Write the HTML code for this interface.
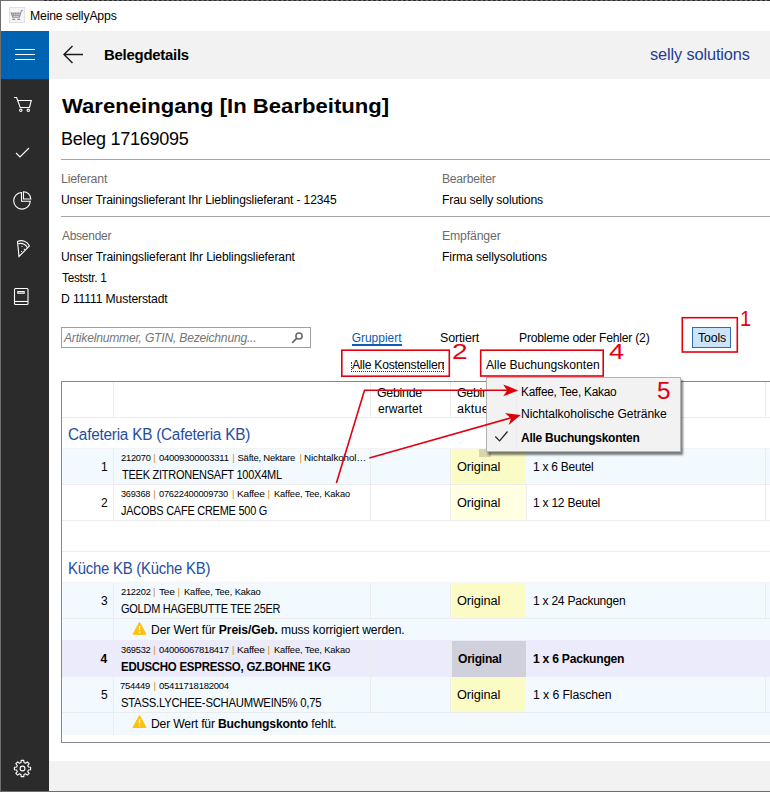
<!DOCTYPE html>
<html lang="de"><head><meta charset="utf-8"><title>Meine sellyApps</title>
<style>
html,body{margin:0;padding:0;}
body{width:770px;height:792px;position:relative;overflow:hidden;background:#fff;font-family:"Liberation Sans",sans-serif;}
.a{position:absolute;}
.t{position:absolute;white-space:nowrap;}
.t b{font-weight:700;}
.bl{display:inline-block;width:0;height:0;}
.hl{position:absolute;height:1px;background:#ececec;}
.vl{position:absolute;width:1px;background:#ececec;}
</style></head><body>
<!-- window chrome -->
<div class="a" style="left:0;top:0;width:770px;height:1px;background:#707070;"></div>
<div class="a" style="left:44px;top:0;width:726px;height:0;border-top:1px dashed #2e2e2e;"></div>
<div class="a" style="left:0;top:31px;width:770px;height:48px;background:#f2f2f2;"></div>
<div class="a" style="left:0;top:31px;width:49px;height:48px;background:#0063b1;"></div>
<div class="a" style="left:0;top:79px;width:49px;height:713px;background:#2b2b2b;"></div>
<div class="a" style="left:49px;top:761px;width:721px;height:31px;background:#f2f2f2;"></div>
<div class="a" style="left:0;top:0;width:1px;height:792px;background:#6e6e6e;"></div>
<div class="a" style="left:0;top:791px;width:770px;height:1px;background:#6e6e6e;"></div>
<!-- title icon -->
<div class="a" style="left:9px;top:7px;width:16px;height:16px;background:#f5f5f5;border:1px solid #e2e2e2;box-sizing:border-box;"></div>
<!-- hamburger -->
<div class="a" style="left:15px;top:49px;width:20px;height:1px;background:#fff;"></div>
<div class="a" style="left:15px;top:54px;width:20px;height:1px;background:#fff;"></div>
<div class="a" style="left:15px;top:59px;width:20px;height:1px;background:#fff;"></div>
<!-- rules -->
<div class="a" style="left:61px;top:159px;width:709px;height:1px;background:#a6a6a6;"></div>
<div class="a" style="left:61px;top:216px;width:709px;height:1px;background:#a6a6a6;"></div>
<!-- search -->
<div class="a" style="left:61px;top:327px;width:250px;height:21px;border:1px solid #9c9fa5;box-sizing:border-box;background:#fff;"></div>
<!-- Gruppiert underline -->
<div class="a" style="left:352px;top:344px;width:50px;height:2px;background:#0a5cb8;"></div>
<!-- tools button -->
<div class="a" style="left:692px;top:327px;width:39px;height:21px;border:1px solid #2a6fb5;box-sizing:border-box;background:#cce4f7;"></div>
<!-- focus dotted -->
<div class="a" style="left:351px;top:362px;width:93px;height:10px;border:1px dotted #333;border-top:none;border-right:1px dotted #333;box-sizing:border-box;"></div>

<!-- table -->
<div class="a" id="tbl" style="left:61px;top:381px;width:720px;height:362px;border:1px solid #828790;box-sizing:border-box;background:#fff;"></div>
<!-- row backgrounds -->
<div class="a" style="left:62px;top:449px;width:708px;height:35px;background:#f2f9ff;"></div>
<div class="a" style="left:62px;top:583px;width:708px;height:57px;background:#f2f9ff;"></div>
<div class="a" style="left:62px;top:640px;width:708px;height:37px;background:#ebebfb;"></div>
<div class="a" style="left:62px;top:677px;width:708px;height:58px;background:#f2f9ff;"></div>
<!-- yellow cells -->
<div class="a" style="left:452px;top:449px;width:74px;height:35px;background:#fbfbc6;"></div>
<div class="a" style="left:452px;top:485px;width:74px;height:35px;background:#ffffe2;"></div>
<div class="a" style="left:452px;top:583px;width:74px;height:35px;background:#fbfbc6;"></div>
<div class="a" style="left:452px;top:641px;width:74px;height:36px;background:#d0d0dc;"></div>
<div class="a" style="left:452px;top:677px;width:74px;height:35px;background:#fbfbc6;"></div>
<!-- grid lines -->
<div class="hl" style="left:62px;top:417px;width:708px;"></div>
<div class="hl" style="left:62px;top:448px;width:708px;background:#f4f4f4;"></div>
<div class="hl" style="left:62px;top:484px;width:708px;"></div>
<div class="hl" style="left:62px;top:520px;width:708px;"></div>
<div class="hl" style="left:62px;top:551px;width:708px;"></div>
<div class="hl" style="left:62px;top:582px;width:708px;background:#f4f4f4;"></div>
<div class="hl" style="left:62px;top:618px;width:708px;"></div>
<div class="hl" style="left:62px;top:712px;width:708px;"></div>
<!-- vertical lines -->
<div class="vl" style="left:113px;top:382px;height:35px;"></div>
<div class="vl" style="left:370px;top:382px;height:35px;"></div>
<div class="vl" style="left:450px;top:382px;height:35px;"></div>
<div class="vl" style="left:526px;top:382px;height:35px;"></div>
<div class="vl" style="left:765px;top:382px;height:35px;"></div>
<div class="vl" style="left:113px;top:449px;height:71px;"></div>
<div class="vl" style="left:370px;top:449px;height:71px;"></div>
<div class="vl" style="left:450px;top:449px;height:71px;"></div>
<div class="vl" style="left:526px;top:485px;height:35px;"></div>
<div class="vl" style="left:765px;top:449px;height:71px;"></div>
<div class="vl" style="left:113px;top:583px;height:152px;"></div>
<div class="vl" style="left:370px;top:583px;height:35px;"></div>
<div class="vl" style="left:450px;top:583px;height:35px;"></div>
<div class="vl" style="left:765px;top:583px;height:35px;"></div>
<div class="vl" style="left:370px;top:641px;height:71px;"></div>
<div class="vl" style="left:450px;top:641px;height:71px;"></div>
<div class="vl" style="left:765px;top:641px;height:71px;"></div>

<!-- popup -->
<div class="a" style="left:486px;top:377px;width:195px;height:75px;background:#f2f2f2;border:1px solid #b2b2b2;box-sizing:border-box;box-shadow:2px 3px 2px rgba(0,0,0,0.5);z-index:5;"></div>
<div class="a" style="left:479px;top:449px;width:12px;height:8px;background:rgba(0,0,0,0.14);z-index:4;"></div>
<div class="a" style="left:516px;top:380px;width:1px;height:69px;background:#ebebeb;z-index:5;"></div>

<span class="t" id="t0" style="top:8.0px;font-size:12px;line-height:17px;color:#000;left:29.85px;letter-spacing:-0.155px;transform:scale(1.0182,1.0000);transform-origin:0 0;">Meine sellyApps</span>
<span class="t" id="t1" style="top:44.0px;font-size:15px;line-height:21px;color:#000;left:103.76px;font-weight:700;letter-spacing:-0.250px;transform:scale(0.9948,1.0000);transform-origin:0 0;">Belegdetails</span>
<span class="t" id="t2" style="top:44.0px;font-size:16px;line-height:22px;color:#1f3c96;left:650.17px;letter-spacing:-0.115px;transform:scale(1.0191,1.0000);transform-origin:0 0;">selly solutions</span>
<span class="t" id="t3" style="top:91.95px;font-size:22px;line-height:31px;color:#000;left:61.60px;font-weight:700;letter-spacing:0.024px;transform:scale(1.0031,0.9150);transform-origin:0 0;">Wareneingang [In Bearbeitung]</span>
<span class="t" id="t4" style="top:127.0px;font-size:18px;line-height:25px;color:#000;left:60.94px;letter-spacing:-0.250px;transform:scale(0.9996,1.0000);transform-origin:0 0;">Beleg 17169095</span>
<span class="t" id="t5" style="top:171.0px;font-size:12px;line-height:17px;color:#6b6b6b;left:60.72px;letter-spacing:-0.213px;transform:scale(1.0296,1.0000);transform-origin:0 0;">Lieferant</span>
<span class="t" id="t6" style="top:192.0px;font-size:12px;line-height:17px;color:#000;left:61.02px;letter-spacing:-0.139px;transform:scale(1.0059,1.0000);transform-origin:0 0;">Unser Trainingslieferant Ihr Lieblingslieferant - 12345</span>
<span class="t" id="t7" style="top:228.0px;font-size:12px;line-height:17px;color:#6b6b6b;left:61.77px;letter-spacing:-0.250px;transform:scale(0.9958,1.0000);transform-origin:0 0;">Absender</span>
<span class="t" id="t8" style="top:249.0px;font-size:12px;line-height:17px;color:#000;left:61.02px;letter-spacing:-0.108px;transform:scale(1.0060,1.0000);transform-origin:0 0;">Unser Trainingslieferant Ihr Lieblingslieferant</span>
<span class="t" id="t9" style="top:270.0px;font-size:12px;line-height:17px;color:#000;left:61.56px;letter-spacing:-0.250px;transform:scale(0.9798,1.0000);transform-origin:0 0;">Teststr. 1</span>
<span class="t" id="t10" style="top:291.0px;font-size:12px;line-height:17px;color:#000;left:61.03px;letter-spacing:-0.130px;transform:scale(1.0117,1.0000);transform-origin:0 0;">D 11111 Musterstadt</span>
<span class="t" id="t11" style="top:171.0px;font-size:12px;line-height:17px;color:#6b6b6b;left:442.37px;letter-spacing:-0.250px;transform:scale(1.0124,1.0000);transform-origin:0 0;">Bearbeiter</span>
<span class="t" id="t12" style="top:192.0px;font-size:12px;line-height:17px;color:#000;left:442.32px;letter-spacing:-0.169px;transform:scale(1.0165,1.0000);transform-origin:0 0;">Frau selly solutions</span>
<span class="t" id="t13" style="top:228.0px;font-size:12px;line-height:17px;color:#6b6b6b;left:442.37px;letter-spacing:-0.150px;transform:scale(1.0222,1.0000);transform-origin:0 0;">Empfänger</span>
<span class="t" id="t14" style="top:249.0px;font-size:12px;line-height:17px;color:#000;left:442.32px;letter-spacing:-0.099px;transform:scale(1.0159,1.0000);transform-origin:0 0;">Firma sellysolutions</span>
<span class="t" id="t15" style="top:330.0px;font-size:12px;line-height:17px;color:#767676;left:64.48px;font-style:italic;letter-spacing:-0.217px;transform:scale(1.0100,1.0000);transform-origin:0 0;">Artikelnummer, GTIN, Bezeichnung...</span>
<span class="t" id="t16" style="top:330.0px;font-size:12px;line-height:17px;color:#0a5cb8;left:351.70px;letter-spacing:-0.029px;">Gruppiert</span>
<span class="t" id="t17" style="top:330.0px;font-size:12px;line-height:17px;color:#000;left:440.10px;letter-spacing:-0.141px;transform:scale(1.0380,1.0000);transform-origin:0 0;">Sortiert</span>
<span class="t" id="t18" style="top:330.0px;font-size:12px;line-height:17px;color:#000;left:519.21px;letter-spacing:-0.220px;transform:scale(1.0131,1.0000);transform-origin:0 0;">Probleme oder Fehler (2)</span>
<span class="t" id="t19" style="top:330.0px;font-size:12px;line-height:17px;color:#000;left:697.77px;letter-spacing:-0.129px;transform:scale(1.0264,1.0000);transform-origin:0 0;">Tools</span>
<span class="t" id="t20" style="top:357.0px;font-size:12px;line-height:17px;color:#000;left:352.17px;letter-spacing:-0.250px;transform:scale(1.0113,1.0000);transform-origin:0 0;">Alle Kostenstellen</span>
<span class="t" id="t21" style="top:357.0px;font-size:12px;line-height:17px;color:#000;left:486.43px;letter-spacing:-0.014px;transform:scale(1.0103,1.0000);transform-origin:0 0;">Alle Buchungskonten</span>
<span class="t" id="t22" style="top:385.0px;font-size:12px;line-height:17px;color:#000;left:376.90px;letter-spacing:-0.250px;transform:scale(1.0297,1.0000);transform-origin:0 0;">Gebinde</span>
<span class="t" id="t23" style="top:401.0px;font-size:12px;line-height:17px;color:#000;left:378.00px;letter-spacing:0.092px;">erwartet</span>
<span class="t" id="t24" style="top:385.0px;font-size:12px;line-height:17px;color:#000;left:456.90px;letter-spacing:-0.250px;transform:scale(1.0297,1.0000);transform-origin:0 0;">Gebinde</span>
<span class="t" id="t25" style="top:401.0px;font-size:12px;line-height:17px;color:#000;left:457.14px;letter-spacing:0.219px;transform:scale(1.0507,1.0000);transform-origin:0 0;">aktuell</span>
<span class="t" id="t26" style="top:424.0px;font-size:16px;line-height:22px;color:#1f4e9e;left:67.73px;letter-spacing:-0.250px;transform:scale(0.9591,1.0000);transform-origin:0 0;">Cafeteria KB (Cafeteria KB)</span>
<span class="t" id="t27" style="top:558.0px;font-size:16px;line-height:22px;color:#1f4e9e;left:67.58px;letter-spacing:-0.250px;transform:scale(0.9311,1.0000);transform-origin:0 0;">Küche KB (Küche KB)</span>
<span class="t" id="t28" style="top:459.0px;font-size:12px;line-height:17px;color:#000;right:662.39px;">1</span>
<span class="t" id="t29" style="top:451.0px;font-size:9.5px;line-height:13px;color:#000;left:121.26px;letter-spacing:-0.250px;transform:scale(0.9813,1.0000);transform-origin:0 0;">212070</span>
<span class="t" id="t30" style="top:451.0px;font-size:9.5px;line-height:13px;color:#d98a1e;left:153.30px;">|</span>
<span class="t" id="t31" style="top:451.0px;font-size:9.5px;line-height:13px;color:#000;left:159.32px;letter-spacing:-0.250px;transform:scale(0.9984,1.0000);transform-origin:0 0;">04009300003311</span>
<span class="t" id="t32" style="top:451.0px;font-size:9.5px;line-height:13px;color:#d98a1e;left:232.35px;">|</span>
<span class="t" id="t33" style="top:451.0px;font-size:9.5px;line-height:13px;color:#000;left:237.50px;letter-spacing:-0.233px;">Säfte, Nektare</span>
<span class="t" id="t34" style="top:451.0px;font-size:9.5px;line-height:13px;color:#d98a1e;left:299.45px;">|</span>
<span class="t" id="t35" style="top:451.0px;font-size:9.5px;line-height:13px;color:#000;left:304.02px;letter-spacing:-0.079px;transform:scale(1.0329,1.0000);transform-origin:0 0;">Nichtalkohol…</span>
<span class="t" id="t36" style="top:467.0px;font-size:12px;line-height:17px;color:#000;left:121.80px;letter-spacing:-0.250px;transform:scale(0.9134,1.0000);transform-origin:0 0;">TEEK ZITRONENSAFT 100X4ML</span>
<span class="t" id="t37" style="top:459.0px;font-size:12px;line-height:17px;color:#000;left:457.30px;letter-spacing:-0.080px;transform:scale(1.0625,1.0000);transform-origin:0 0;">Original</span>
<span class="t" id="t38" style="top:459.0px;font-size:12px;line-height:17px;color:#000;left:532.71px;letter-spacing:-0.250px;transform:scale(0.9992,1.0000);transform-origin:0 0;">1 x 6 Beutel</span>
<span class="t" id="t39" style="top:495.0px;font-size:12px;line-height:17px;color:#000;right:662.37px;">2</span>
<span class="t" id="t40" style="top:487.0px;font-size:9.5px;line-height:13px;color:#000;left:121.06px;letter-spacing:-0.250px;transform:scale(0.9649,1.0000);transform-origin:0 0;">369368</span>
<span class="t" id="t41" style="top:487.0px;font-size:9.5px;line-height:13px;color:#d98a1e;left:153.30px;">|</span>
<span class="t" id="t42" style="top:487.0px;font-size:9.5px;line-height:13px;color:#000;left:159.40px;letter-spacing:-0.250px;transform:scale(0.9785,1.0000);transform-origin:0 0;">07622400009730</span>
<span class="t" id="t43" style="top:487.0px;font-size:9.5px;line-height:13px;color:#d98a1e;left:232.07px;">|</span>
<span class="t" id="t44" style="top:487.0px;font-size:9.5px;line-height:13px;color:#000;left:236.65px;letter-spacing:-0.250px;transform:scale(1.0701,1.0000);transform-origin:0 0;">Kaffee</span>
<span class="t" id="t45" style="top:487.0px;font-size:9.5px;line-height:13px;color:#d98a1e;left:267.50px;">|</span>
<span class="t" id="t46" style="top:487.0px;font-size:9.5px;line-height:13px;color:#000;left:274.32px;letter-spacing:-0.126px;transform:scale(0.9781,1.0000);transform-origin:0 0;">Kaffee, Tee, Kakao</span>
<span class="t" id="t47" style="top:503.0px;font-size:12px;line-height:17px;color:#000;left:121.15px;letter-spacing:-0.250px;transform:scale(0.9113,1.0000);transform-origin:0 0;">JACOBS CAFE CREME 500 G</span>
<span class="t" id="t48" style="top:495.0px;font-size:12px;line-height:17px;color:#000;left:457.30px;letter-spacing:-0.080px;transform:scale(1.0625,1.0000);transform-origin:0 0;">Original</span>
<span class="t" id="t49" style="top:495.0px;font-size:12px;line-height:17px;color:#000;left:532.74px;letter-spacing:-0.250px;transform:scale(1.0034,1.0000);transform-origin:0 0;">1 x 12 Beutel</span>
<span class="t" id="t50" style="top:593.0px;font-size:12px;line-height:17px;color:#000;right:662.45px;">3</span>
<span class="t" id="t51" style="top:585.0px;font-size:9.5px;line-height:13px;color:#000;left:121.35px;letter-spacing:-0.250px;transform:scale(0.9808,1.0000);transform-origin:0 0;">212202</span>
<span class="t" id="t52" style="top:585.0px;font-size:9.5px;line-height:13px;color:#d98a1e;left:153.08px;">|</span>
<span class="t" id="t53" style="top:585.0px;font-size:9.5px;line-height:13px;color:#000;left:158.65px;letter-spacing:-0.250px;transform:scale(1.0718,1.0000);transform-origin:0 0;">Tee</span>
<span class="t" id="t54" style="top:585.0px;font-size:9.5px;line-height:13px;color:#d98a1e;left:177.45px;">|</span>
<span class="t" id="t55" style="top:585.0px;font-size:9.5px;line-height:13px;color:#000;left:183.96px;letter-spacing:-0.126px;transform:scale(0.9859,1.0000);transform-origin:0 0;">Kaffee, Tee, Kakao</span>
<span class="t" id="t56" style="top:601.0px;font-size:12px;line-height:17px;color:#000;left:120.54px;letter-spacing:-0.250px;transform:scale(0.9128,1.0000);transform-origin:0 0;">GOLDM HAGEBUTTE TEE 25ER</span>
<span class="t" id="t57" style="top:593.0px;font-size:12px;line-height:17px;color:#000;left:457.30px;letter-spacing:-0.080px;transform:scale(1.0625,1.0000);transform-origin:0 0;">Original</span>
<span class="t" id="t58" style="top:593.0px;font-size:12px;line-height:17px;color:#000;left:532.71px;letter-spacing:-0.250px;transform:scale(1.0037,1.0000);transform-origin:0 0;">1 x 24 Packungen</span>
<span class="t" id="t59" style="top:651.0px;font-size:12px;line-height:17px;color:#000;right:662.90px;font-weight:700;">4</span>
<span class="t" id="t60" style="top:643.0px;font-size:9.5px;line-height:13px;color:#000;left:121.22px;letter-spacing:-0.250px;transform:scale(0.9770,1.0000);transform-origin:0 0;">369532</span>
<span class="t" id="t61" style="top:643.0px;font-size:9.5px;line-height:13px;color:#d98a1e;left:153.30px;">|</span>
<span class="t" id="t62" style="top:643.0px;font-size:9.5px;line-height:13px;color:#000;left:159.11px;letter-spacing:-0.250px;transform:scale(0.9909,1.0000);transform-origin:0 0;">04006067818417</span>
<span class="t" id="t63" style="top:643.0px;font-size:9.5px;line-height:13px;color:#d98a1e;left:232.06px;">|</span>
<span class="t" id="t64" style="top:643.0px;font-size:9.5px;line-height:13px;color:#000;left:236.65px;letter-spacing:-0.250px;transform:scale(1.0701,1.0000);transform-origin:0 0;">Kaffee</span>
<span class="t" id="t65" style="top:643.0px;font-size:9.5px;line-height:13px;color:#d98a1e;left:267.50px;">|</span>
<span class="t" id="t66" style="top:643.0px;font-size:9.5px;line-height:13px;color:#000;left:274.32px;letter-spacing:-0.126px;transform:scale(0.9781,1.0000);transform-origin:0 0;">Kaffee, Tee, Kakao</span>
<span class="t" id="t67" style="top:659.0px;font-size:12px;line-height:17px;color:#000;left:120.76px;font-weight:700;letter-spacing:-0.250px;transform:scale(0.9532,1.0000);transform-origin:0 0;">EDUSCHO ESPRESSO, GZ.BOHNE 1KG</span>
<span class="t" id="t68" style="top:651.0px;font-size:12px;line-height:17px;color:#000;left:458.27px;font-weight:700;letter-spacing:-0.250px;transform:scale(1.0078,1.0000);transform-origin:0 0;">Original</span>
<span class="t" id="t69" style="top:651.0px;font-size:12px;line-height:17px;color:#000;left:532.75px;font-weight:700;letter-spacing:-0.250px;transform:scale(1.0103,1.0000);transform-origin:0 0;">1 x 6 Packungen</span>
<span class="t" id="t70" style="top:687.0px;font-size:12px;line-height:17px;color:#000;right:662.45px;">5</span>
<span class="t" id="t71" style="top:679.0px;font-size:9.5px;line-height:13px;color:#000;left:120.13px;letter-spacing:-0.250px;transform:scale(0.9908,1.0000);transform-origin:0 0;">754449</span>
<span class="t" id="t72" style="top:679.0px;font-size:9.5px;line-height:13px;color:#d98a1e;left:153.42px;">|</span>
<span class="t" id="t73" style="top:679.0px;font-size:9.5px;line-height:13px;color:#000;left:159.08px;letter-spacing:-0.250px;transform:scale(1.0022,1.0000);transform-origin:0 0;">05411718182004</span>
<span class="t" id="t74" style="top:695.0px;font-size:12px;line-height:17px;color:#000;left:120.55px;letter-spacing:-0.250px;transform:scale(0.9412,1.0000);transform-origin:0 0;">STASS.LYCHEE-SCHAUMWEIN5% 0,75</span>
<span class="t" id="t75" style="top:687.0px;font-size:12px;line-height:17px;color:#000;left:457.30px;letter-spacing:-0.080px;transform:scale(1.0625,1.0000);transform-origin:0 0;">Original</span>
<span class="t" id="t76" style="top:687.0px;font-size:12px;line-height:17px;color:#000;left:532.76px;letter-spacing:-0.081px;transform:scale(1.0211,1.0000);transform-origin:0 0;">1 x 6 Flaschen</span>
<span class="t" id="t77" style="top:622.0px;font-size:12px;line-height:17px;color:#000;left:150.67px;letter-spacing:-0.095px;transform:scale(1.0085,1.0000);transform-origin:0 0;">Der Wert für <b>Preis/Geb.</b> muss korrigiert werden.</span>
<span class="t" id="t78" style="top:716.0px;font-size:12px;line-height:17px;color:#000;left:150.67px;letter-spacing:-0.177px;transform:scale(1.0124,1.0000);transform-origin:0 0;">Der Wert für <b>Buchungskonto</b> fehlt.</span>
<span class="t" id="t79" style="top:384.0px;font-size:12px;line-height:17px;color:#000;left:520.53px;letter-spacing:-0.250px;transform:scale(0.9890,1.0000);transform-origin:0 0;z-index:6;">Kaffee, Tee, Kakao</span>
<span class="t" id="t80" style="top:406.0px;font-size:12px;line-height:17px;color:#000;left:520.75px;letter-spacing:-0.063px;transform:scale(1.0092,1.0000);transform-origin:0 0;z-index:6;">Nichtalkoholische Getränke</span>
<span class="t" id="t81" style="top:430.0px;font-size:12px;line-height:17px;color:#000;left:521.42px;font-weight:700;letter-spacing:-0.250px;transform:scale(0.9989,1.0000);transform-origin:0 0;z-index:6;">Alle Buchungskonten</span>
<span class="t" id="t82" style="top:303.0px;font-size:22px;line-height:31px;color:#e1000f;left:739.97px;transform:scale(0.9085,1.0000);transform-origin:0 0;">1</span>
<span class="t" id="t83" style="top:336.0px;font-size:22px;line-height:31px;color:#e1000f;left:452.01px;transform:scale(1.2775,1.0000);transform-origin:0 0;">2</span>
<span class="t" id="t84" style="top:336.0px;font-size:22px;line-height:31px;color:#e1000f;left:608.51px;transform:scale(1.2321,1.0000);transform-origin:0 0;">4</span>
<span class="t" id="t85" style="top:375.0px;font-size:23px;line-height:32px;color:#e1000f;left:657.34px;transform:scale(1.0608,1.0000);transform-origin:0 0;z-index:6;">5</span>

<svg class="a" style="left:0;top:0;z-index:7;" width="770" height="792" viewBox="0 0 770 792" fill="none">
<!-- title icon cart -->
<g stroke="#8e8e8e" stroke-width="1.1" fill="none"><path d="M11 12.3l1.8 5h6.6l1.8-6.2q.3-.9 1.6-.9M12 13.2h8.2M12.6 15.2h7.4"/><path d="M13.6 12.5v4M15.8 12.5v4M18 12.5v4" stroke-width=".9"/><path d="M12.2 19.4h3M17.2 19.4h3" stroke-width="1.3"/></g>
<!-- back arrow -->
<path d="M83 54.5H64M72.5 46L64 54.5L72.5 63" stroke="#1a1a1a" stroke-width="1.4"/>
<!-- magnifier -->
<circle cx="299" cy="336" r="3.1" stroke="#666" stroke-width="1.5"/><path d="M296.8 338.2L292.2 342.8" stroke="#666" stroke-width="1.7"/>
<!-- menu check -->
<path d="M495.3 436.5L499.6 440.8L507.5 431.5" stroke="#222" stroke-width="1.2"/>
<!-- sidebar icons -->
<g stroke="#fff" stroke-width="1.1">
<path d="M14 97.5h2.6l3.6 10h9.3l1.8-7H17.6"/><circle cx="20.8" cy="110.3" r="1.2"/><circle cx="28.3" cy="110.3" r="1.2"/>
<path d="M16 153l4 4l9-9"/>
<path d="M21.5 192.5a8.3 8.3 0 1 0 8.8 8.8h-8.8z"/><path d="M23.5 191.8v7.2h7.3a7.3 7.3 0 0 0-7.3-7.2z"/>
<path d="M17.5 241.5l1.5 15l10.5-10.5a9 9 0 0 0-12-4.5z"/><path d="M18.2 243.8a7.5 7.5 0 0 1 9.3 3.9"/><path d="M21.5 246.5h1M23.8 249.3h1M21 251.5h1" stroke-width="1.2"/>
<rect x="14.5" y="288.5" width="13.5" height="16" rx="1"/><path d="M14.5 301.5h13.5"/><rect x="17.8" y="291.6" width="6.4" height="1.6"/>
<circle cx="22.5" cy="768.5" r="2.4"/>
<path d="M20.99 762.59L21.19 760.40L23.81 760.40L24.01 762.59L25.61 763.25L27.30 761.85L29.15 763.70L27.75 765.39L28.41 766.99L30.60 767.19L30.60 769.81L28.41 770.01L27.75 771.61L29.15 773.30L27.30 775.15L25.61 773.75L24.01 774.41L23.81 776.60L21.19 776.60L20.99 774.41L19.39 773.75L17.70 775.15L15.85 773.30L17.25 771.61L16.59 770.01L14.40 769.81L14.40 767.19L16.59 766.99L17.25 765.39L15.85 763.70L17.70 761.85L19.39 763.25Z" stroke-linejoin="round"/>
</g>
<!-- warning icons -->
<g>
<path d="M139.5 622.3L146 634.3H133Z" fill="#ffc20a" stroke="#ffc20a" stroke-width="1" stroke-linejoin="round"/>
<path d="M139.5 626v4.3M139.5 631.6v1.4" stroke="#fff" stroke-width="1.3"/>
<path d="M139.5 715.5L146 727.5H133Z" fill="#ffc20a" stroke="#ffc20a" stroke-width="1" stroke-linejoin="round"/>
<path d="M139.5 719.2v4.3M139.5 724.8v1.4" stroke="#fff" stroke-width="1.3"/>
</g>
<!-- red annotations -->
<g stroke="#e1000f" stroke-width="1.6">
<rect x="682.3" y="317.7" width="55" height="34.3"/>
<rect x="341.8" y="350.2" width="107.5" height="26"/>
<rect x="480.7" y="350.2" width="122.5" height="25.8"/>
<path d="M336.4 483L364.5 390.3H508"/>
<path d="M369.3 458L511 417.8"/>
</g>
<path d="M518.2 390.4L503.2 384.4L507.2 390.4L503.2 396.3Z" fill="#dc000a"/>
<path d="M520.8 415L505 413.1L511 418.5L508.6 425Z" fill="#dc000a"/>
</svg>
</body></html>
